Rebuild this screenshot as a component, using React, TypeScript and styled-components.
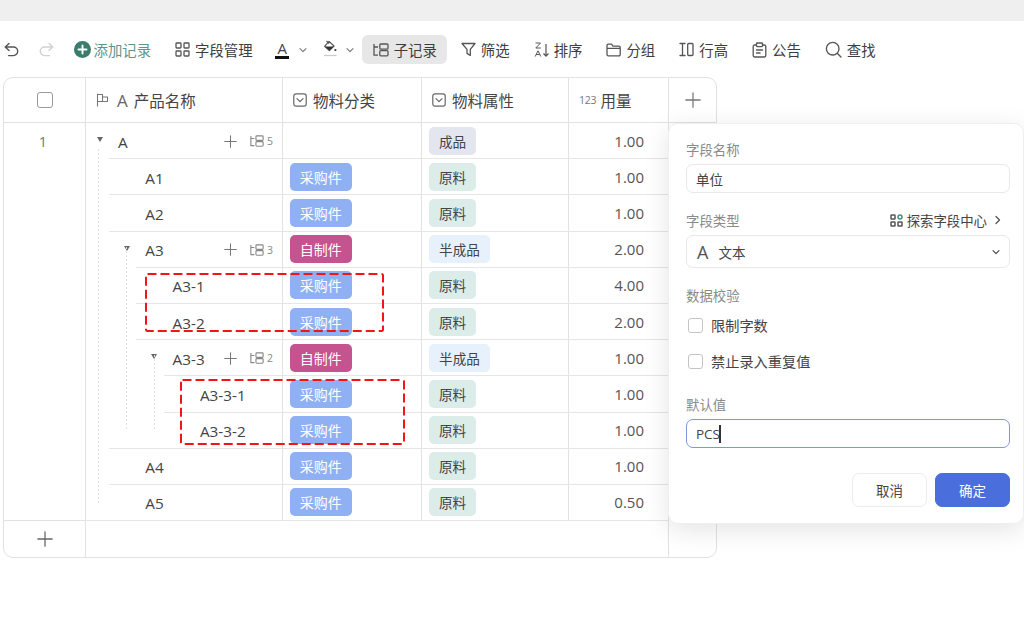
import React from "react";
import styled, { createGlobalStyle } from "styled-components";

const GlobalStyle = createGlobalStyle`
    html, body { margin: 0; padding: 0; background: #fff; }
    body { font-family: "Open Sans", "Noto Sans CJK SC", sans-serif; color: #3d3d3d; }
    * { box-sizing: border-box; }
`;

const Page = styled.div`
    position: relative;
    width: 1024px;
    height: 641px;
    overflow: hidden;
`;

const TopBand = styled.div`
    height: 21px;
    background: #efefef;
`;

/* ---------- toolbar ---------- */

const Toolbar = styled.div`
    display: flex;
    align-items: center;
    gap: 3px;
    height: 29px;
    margin-top: 14px;
    padding-left: 4px;
`;

const HistoryButton = styled.span<{ $muted?: boolean; $gap: number }>`
    display: flex;
    color: ${(p) => (p.$muted ? "#d2d2d2" : "#555")};
    margin-right: ${(p) => p.$gap}px;
`;

const ToolButton = styled.div<{ $active?: boolean; $green?: boolean }>`
    display: flex;
    align-items: center;
    gap: ${(p) => (p.$green ? 3 : 5)}px;
    height: 29px;
    padding: 0 10.5px;
    border-radius: 6px;
    font-size: 14.4px;
    white-space: nowrap;
    color: ${(p) => (p.$green ? "#5f9488" : "#3d3d3d")};
    background: ${(p) => (p.$active ? "#e7e7e7" : "transparent")};
    & svg { color: #555; flex: none; }
`;

const ColorButton = styled.div<{ $left: number; $right: number }>`
    display: flex;
    align-items: center;
    justify-content: space-between;
    width: 31.5px;
    height: 29px;
    margin-left: ${(p) => p.$left}px;
    margin-right: ${(p) => p.$right}px;
    color: #777;
`;

const LetterSwatch = styled.span`
    display: flex;
    flex-direction: column;
    align-items: center;
    width: 14px;
    font-size: 15px;
    line-height: 14px;
    color: #444;
    &::after {
        content: "";
        width: 14px;
        height: 3px;
        margin-top: 1px;
        background: #111;
    }
`;

/* ---------- table ---------- */

const Table = styled.div`
    width: 714px;
    margin: 13px 0 0 3px;
    border: 1px solid #e2e2e2;
    border-radius: 10px;
    overflow: hidden;
`;

const HeaderRow = styled.div`
    display: grid;
    grid-template-columns: 82px 197px 139px 147px 100px 1fr;
    height: 45px;
    border-bottom: 1px solid #e2e2e2;
`;

const HeaderCell = styled.div<{ $center?: boolean; $last?: boolean }>`
    display: flex;
    align-items: center;
    justify-content: ${(p) => (p.$center ? "center" : "flex-start")};
    gap: 6px;
    padding-left: ${(p) => (p.$center ? 0 : 10)}px;
    border-right: ${(p) => (p.$last ? "none" : "1px solid #e2e2e2")};
    font-size: 15.5px;
    color: #444;
    & svg { color: #777; flex: none; }
`;

const HeaderLetter = styled.span`
    font-size: 17px;
    line-height: 1;
    color: #666;
    margin: 0 0 0 2px;
`;

const NumberMark = styled.span`
    font-size: 10.5px;
    color: #777;
    letter-spacing: -0.2px;
    margin-right: -2px;
`;

const HeaderBox = styled.span`
    width: 16px;
    height: 16px;
    border: 1.5px solid #9a9a9a;
    border-radius: 3px;
`;

const Body = styled.div`
    position: relative;
    display: grid;
    grid-template-columns: 82px 1fr;
`;

const RowNumber = styled.div`
    padding-top: 9px;
    padding-right: 3px;
    border-right: 1px solid #e2e2e2;
    border-bottom: 1px solid #e2e2e2;
    font-size: 14.5px;
    color: #777;
    text-align: center;
`;

const Row = styled.div`
    display: grid;
    grid-template-columns: 197px 139px 147px 100px 1fr;
    height: 36.2px;
`;

const Cell = styled.div<{ $last?: boolean }>`
    display: flex;
    align-items: center;
    padding-left: 7px;
    border-right: ${(p) => (p.$last ? "none" : "1px solid #e2e2e2")};
    border-bottom: ${(p) => (p.$last ? "none" : "1px solid #e6e6e6")};
    min-width: 0;
`;

const NameCell = styled.div<{ $depth: number; $line: number }>`
    position: relative;
    display: flex;
    align-items: center;
    padding-left: ${(p) => 9 + p.$depth * 27.3}px;
    padding-right: 9px;
    border-right: 1px solid #e2e2e2;
    &::after {
        content: "";
        position: absolute;
        left: ${(p) => p.$line}px;
        right: 0;
        bottom: 0;
        height: 1px;
        background: #e6e6e6;
    }
`;

const Toggle = styled.span<{ $hidden?: boolean }>`
    flex: none;
    width: 0;
    height: 0;
    margin: 0 15.5px 3px 1.5px;
    visibility: ${(p) => (p.$hidden ? "hidden" : "visible")};
    border-left: 3.5px solid transparent;
    border-right: 3.5px solid transparent;
    border-top: 5px solid #666;
`;

const Name = styled.span`
    flex: 1;
    padding-top: 1px;
    font-size: 15.3px;
    white-space: nowrap;
    color: #444;
`;

const RowTools = styled.span`
    display: flex;
    align-items: center;
    gap: 13px;
    margin-left: auto;
    color: #777;
`;

const ChildCount = styled.span`
    display: flex;
    align-items: center;
    gap: 3px;
    font-size: 10.5px;
    color: #888;
`;

const Tag = styled.span<{ $bg: string; $fg: string; $wide?: boolean }>`
    display: flex;
    align-items: center;
    justify-content: center;
    height: 28px;
    width: ${(p) => (p.$wide ? "61px" : "47px")};
    border-radius: 5px;
    font-size: 13.6px;
    background: ${(p) => p.$bg};
    color: ${(p) => p.$fg};
`;

const MakeTag = styled(Tag)`
    width: 61.5px;
    font-size: 14px;
`;

const Amount = styled.div`
    display: flex;
    align-items: center;
    justify-content: flex-end;
    padding-right: 24px;
    border-right: 1px solid #e2e2e2;
    border-bottom: 1px solid #e6e6e6;
    font-size: 15px;
    color: #555;
`;

const Guide = styled.span<{ $x: number; $y: number; $h: number }>`
    position: absolute;
    left: ${(p) => p.$x}px;
    top: ${(p) => p.$y}px;
    width: 1px;
    height: ${(p) => p.$h}px;
    background: repeating-linear-gradient(to bottom, #e0e0e0 0 2px, transparent 2px 4px);
`;

const FooterRow = styled.div`
    display: grid;
    grid-template-columns: 82px 583px 1fr;
    height: 36px;
`;

const FooterCell = styled.div<{ $last?: boolean }>`
    display: flex;
    align-items: center;
    justify-content: center;
    border-right: ${(p) => (p.$last ? "none" : "1px solid #e2e2e2")};
    color: #666;
`;

/* ---------- red annotation ---------- */

const Annotation = styled.svg<{ $x: number; $y: number }>`
    position: absolute;
    left: ${(p) => p.$x}px;
    top: ${(p) => p.$y}px;
    overflow: visible;
`;

/* ---------- field dialog ---------- */

const Panel = styled.div`
    position: absolute;
    left: 668px;
    top: 123px;
    display: flex;
    flex-direction: column;
    width: 356px;
    height: 401px;
    padding: 16px 13px 16px 17px;
    background: #fff;
    border: 1px solid #efefef;
    border-radius: 10px;
    box-shadow: 0 6px 26px rgba(0, 0, 0, 0.11);
`;

const LabelRow = styled.div<{ $top?: number }>`
    display: flex;
    align-items: center;
    justify-content: space-between;
    height: 18px;
    margin-top: ${(p) => p.$top ?? 0}px;
    font-size: 13.4px;
    color: #8a8a8a;
`;

const ExploreLink = styled.span`
    display: flex;
    align-items: center;
    gap: 4px;
    padding-right: 8px;
    font-size: 13.4px;
    color: #444;
    & svg:last-child { margin-left: 3px; }
`;

const TextBox = styled.div<{ $focus?: boolean }>`
    display: flex;
    align-items: center;
    height: 29px;
    margin-top: 6px;
    padding-left: 9px;
    border: 1px solid ${(p) => (p.$focus ? "#7f95dc" : "#e8e8e8")};
    border-radius: 7px;
    font-size: 13.5px;
    color: #444;
`;

const Caret = styled.span`
    width: 2px;
    height: 18px;
    margin-left: -1px;
    background: #333;
`;

const SelectBox = styled(TextBox)`
    height: 33px;
    margin-top: 6px;
    padding: 0 9px 0 10px;
    gap: 10px;
`;

const SelectLetter = styled.span`
    font-size: 18px;
    line-height: 1;
    color: #555;
`;

const SelectText = styled.span`
    flex: 1;
`;

const CheckRow = styled.label<{ $top: number }>`
    display: flex;
    align-items: center;
    gap: 8px;
    height: 20px;
    margin-top: ${(p) => p.$top}px;
    padding-left: 2px;
    font-size: 14.2px;
    color: #444;
`;

const CheckMark = styled.span`
    width: 15px;
    height: 15px;
    border: 1.5px solid #c4c4c4;
    border-radius: 3px;
`;

const Actions = styled.div`
    display: flex;
    justify-content: flex-end;
    gap: 8px;
    margin-top: auto;
`;

const Button = styled.div<{ $primary?: boolean }>`
    display: flex;
    align-items: center;
    justify-content: center;
    width: 75px;
    height: 34px;
    border-radius: 7px;
    font-size: 13.5px;
    color: ${(p) => (p.$primary ? "#fff" : "#444")};
    background: ${(p) => (p.$primary ? "#4a6fdc" : "#fff")};
    border: 1px solid ${(p) => (p.$primary ? "#4a6fdc" : "#ececec")};
`;

/* ---------- icons ---------- */

type IconProps = { size?: number };

const Svg = (props: { w: number; h: number; children: React.ReactNode; sw?: number }) => (
    <svg
        width={props.w}
        height={props.h}
        viewBox={`0 0 ${props.w} ${props.h}`}
        fill="none"
        stroke="currentColor"
        strokeWidth={props.sw ?? 1.3}
        strokeLinecap="round"
        strokeLinejoin="round"
    >
        {props.children}
    </svg>
);

const UndoIcon = () => (
    <Svg w={15} h={15} sw={1.4}>
        <path d="M5 1.5 1.2 5 5 8.6M1.4 5h8a4.3 4.3 0 0 1 0 8.6H4.5" />
    </Svg>
);

const RedoIcon = () => (
    <Svg w={15} h={15} sw={1.4}>
        <path d="M10 1.5 13.8 5 10 8.6M13.6 5h-8a4.3 4.3 0 0 0 0 8.6h5" />
    </Svg>
);

const AddCircle = () => (
    <svg width="17" height="17" viewBox="0 0 17 17">
        <circle cx="8.5" cy="8.5" r="8.5" fill="#3c7c6c" />
        <path d="M8.5 4.5v8M4.5 8.5h8" stroke="#fff" strokeWidth="1.9" strokeLinecap="round" />
    </svg>
);

const FieldsIcon = () => (
    <Svg w={15} h={15}>
        <rect x="1" y="1" width="5" height="5" rx="0.8" />
        <rect x="9" y="1" width="5" height="5" rx="0.8" />
        <rect x="1" y="9" width="5" height="5" rx="0.8" />
        <rect x="9" y="9" width="5" height="5" rx="0.8" />
    </Svg>
);

const Chevron = ({ size = 8 }: IconProps) => (
    <svg width={size} height={size} viewBox="0 0 8 8" fill="none" stroke="currentColor" strokeWidth="1.1" strokeLinecap="round" strokeLinejoin="round">
        <path d="M1 2.6 4 5.6 7 2.6" />
    </svg>
);

const BucketIcon = () => (
    <svg width="14" height="19" viewBox="0 0 14 19" fill="none">
        <path d="M6 1.4 11 6 6.4 10.6 1.6 6.4Z" stroke="#555" strokeWidth="1.2" strokeLinejoin="round" />
        <path d="M1.6 6.4h9.4L6.4 10.6Z" fill="#333" />
        <path d="M3.5 1 6 3.5" stroke="#555" strokeWidth="1.1" />
        <circle cx="12.4" cy="10" r="1.1" fill="#333" />
        <path d="M1 15.5h12.5" stroke="#ccc" strokeWidth="1.3" />
    </svg>
);

const SubRecordIcon = ({ size = 16 }: IconProps) => (
    <svg width={size} height={size * 0.875} viewBox="0 0 16 14" fill="none" stroke="currentColor" strokeWidth="1.3" strokeLinejoin="round">
        <path d="M1 1v11.2h4M1 4h4" />
        <rect x="6.8" y="1" width="8.2" height="5.2" rx="1" />
        <rect x="6.8" y="7.6" width="8.2" height="5.2" rx="1" />
    </svg>
);

const FilterIcon = () => (
    <Svg w={15} h={15}>
        <path d="M1 1.5h13L9.3 7.4v6L6 11.4v-4Z" />
    </Svg>
);

const SortIcon = () => (
    <svg width="15" height="16" viewBox="0 0 15 16" fill="none">
        <path d="M1.5 1h5L1.8 6h5" stroke="#555" strokeWidth="1" strokeLinejoin="round" />
        <path d="M1.2 14.5 4 8.8l2.8 5.7M2.2 12.5h3.6" stroke="#555" strokeWidth="1" strokeLinejoin="round" />
        <path d="M12 2v12M9.5 11.5 12 14.2l2.5-2.7" stroke="#555" strokeWidth="1.2" />
    </svg>
);

const FolderIcon = () => (
    <Svg w={15} h={14}>
        <path d="M1 2.5A1.3 1.3 0 0 1 2.3 1.2h3.2l1.5 2H13A1.2 1.2 0 0 1 14.2 4.4v7.2A1.2 1.2 0 0 1 13 12.8H2.3A1.3 1.3 0 0 1 1 11.5ZM1 5.4h13" />
    </Svg>
);

const RowHeightIcon = () => (
    <Svg w={15} h={15}>
        <path d="M1 1.5h5M1 13.5h5M3.5 1.5v12" />
        <rect x="8.7" y="1.5" width="5.3" height="12" rx="1" />
    </Svg>
);

const NoticeIcon = () => (
    <Svg w={15} h={16}>
        <path d="M4.5 3H2.6A1.4 1.4 0 0 0 1.2 4.4v9.2A1.4 1.4 0 0 0 2.6 15h9.8a1.4 1.4 0 0 0 1.4-1.4V4.4A1.4 1.4 0 0 0 12.4 3h-1.9" />
        <rect x="4.5" y="1" width="6" height="3.6" rx="0.8" />
        <path d="M4.5 8h6M4.5 11h3.6" />
    </Svg>
);

const SearchIcon = () => (
    <Svg w={17} h={17} sw={1.35}>
        <circle cx="7.7" cy="7.7" r="6.3" />
        <path d="m12.4 12.4 3.6 3.6" />
    </Svg>
);

const FlagIcon = () => (
    <Svg w={13} h={14} sw={1.1}>
        <path d="M1.5 1v12M1.5 1.5h5v7h-5M6.5 4h5v4.5h-5" />
    </Svg>
);

const SelectFieldIcon = () => (
    <svg width="14" height="14" viewBox="0 0 14 14" fill="none" stroke="#666" strokeWidth="1.2" strokeLinecap="round" strokeLinejoin="round">
        <rect x="0.8" y="0.8" width="12.4" height="12.4" rx="2.2" />
        <path d="M4 5.6 7 8.6 10 5.6" />
    </svg>
);

const PlusIcon = ({ size = 15 }: IconProps) => (
    <svg width={size} height={size} viewBox="0 0 15 15" fill="none" stroke="currentColor" strokeWidth="1.2" strokeLinecap="round">
        <path d="M7.5 0.8v13.4M0.8 7.5h13.4" />
    </svg>
);

const ExploreIcon = () => (
    <svg width="13" height="13" viewBox="0 0 13 13" fill="none" stroke="#555" strokeWidth="1.5">
        <rect x="1" y="1" width="4" height="4" rx="0.6" />
        <rect x="1" y="8" width="4" height="4" rx="0.6" />
        <rect x="8" y="8" width="4" height="4" rx="0.6" />
        <circle cx="10" cy="3" r="2" stroke="#3f8f7b" />
    </svg>
);

const ChevronRight = () => (
    <svg width="8" height="10" viewBox="0 0 8 10" fill="none" stroke="#555" strokeWidth="1.3" strokeLinecap="round" strokeLinejoin="round">
        <path d="M2 1.5 5.5 5 2 8.5" />
    </svg>
);

/* ---------- data ---------- */

type Part = { label: string; bg: string; fg: string };

const bought: Part = { label: "采购件", bg: "#8fb1f4", fg: "#fff" };
const made: Part = { label: "自制件", bg: "#c4538f", fg: "#fff" };
const finished: Part = { label: "成品", bg: "#e3e6ef", fg: "#444" };
const raw: Part = { label: "原料", bg: "#dcece8", fg: "#444" };
const half: Part = { label: "半成品", bg: "#e6f1fb", fg: "#444" };

type Item = {
    name: string;
    depth: number;
    line: number;
    children?: number;
    kind?: Part;
    attr: Part;
    qty: string;
};

const rows: Item[] = [
    { name: "A", depth: 0, line: 23, children: 5, attr: finished, qty: "1.00" },
    { name: "A1", depth: 1, line: 23, kind: bought, attr: raw, qty: "1.00" },
    { name: "A2", depth: 1, line: 23, kind: bought, attr: raw, qty: "1.00" },
    { name: "A3", depth: 1, line: 50, children: 3, kind: made, attr: half, qty: "2.00" },
    { name: "A3-1", depth: 2, line: 50, kind: bought, attr: raw, qty: "4.00" },
    { name: "A3-2", depth: 2, line: 50, kind: bought, attr: raw, qty: "2.00" },
    { name: "A3-3", depth: 2, line: 78, children: 2, kind: made, attr: half, qty: "1.00" },
    { name: "A3-3-1", depth: 3, line: 78, kind: bought, attr: raw, qty: "1.00" },
    { name: "A3-3-2", depth: 3, line: 23, kind: bought, attr: raw, qty: "1.00" },
    { name: "A4", depth: 1, line: 23, kind: bought, attr: raw, qty: "1.00" },
    { name: "A5", depth: 1, line: 0, kind: bought, attr: raw, qty: "0.50" },
];

const tools = [
    { label: "筛选", icon: <FilterIcon /> },
    { label: "排序", icon: <SortIcon /> },
    { label: "分组", icon: <FolderIcon /> },
    { label: "行高", icon: <RowHeightIcon /> },
    { label: "公告", icon: <NoticeIcon /> },
    { label: "查找", icon: <SearchIcon /> },
];

const RedBox = (props: { x: number; y: number; w: number; h: number }) => (
    <Annotation $x={props.x} $y={props.y} width={props.w} height={props.h}>
        <rect
            x="0"
            y="0"
            width={props.w}
            height={props.h}
            rx="1.5"
            fill="none"
            stroke="#f51414"
            strokeWidth="2"
            strokeDasharray="9 4"
        />
    </Annotation>
);

const App = () => {
    return (
        <Page>
            <GlobalStyle />
            <TopBand />
            <Toolbar>
                <HistoryButton $gap={17}><UndoIcon /></HistoryButton>
                <HistoryButton $muted $gap={6}><RedoIcon /></HistoryButton>
                <ToolButton $green><AddCircle />添加记录</ToolButton>
                <ToolButton><FieldsIcon />字段管理</ToolButton>
                <ColorButton $left={9} $right={4}><LetterSwatch>A</LetterSwatch><Chevron /></ColorButton>
                <ColorButton $left={9} $right={5}><BucketIcon /><Chevron /></ColorButton>
                <ToolButton $active><SubRecordIcon />子记录</ToolButton>
                {tools.map((t) => (
                    <ToolButton key={t.label}>{t.icon}{t.label}</ToolButton>
                ))}
            </Toolbar>

            <Table>
                <HeaderRow>
                    <HeaderCell $center><HeaderBox /></HeaderCell>
                    <HeaderCell><FlagIcon /><HeaderLetter>A</HeaderLetter>产品名称</HeaderCell>
                    <HeaderCell><SelectFieldIcon />物料分类</HeaderCell>
                    <HeaderCell><SelectFieldIcon />物料属性</HeaderCell>
                    <HeaderCell><NumberMark>123</NumberMark>用量</HeaderCell>
                    <HeaderCell $center $last><PlusIcon size={16} /></HeaderCell>
                </HeaderRow>
                <Body>
                    <RowNumber>1</RowNumber>
                    <div>
                        {rows.map((r) => (
                            <Row key={r.name}>
                                <NameCell $depth={r.depth} $line={r.line}>
                                    <Toggle $hidden={!r.children} />
                                    <Name>{r.name}</Name>
                                    {r.children ? (
                                        <RowTools>
                                            <PlusIcon size={13} />
                                            <ChildCount><SubRecordIcon size={14} />{r.children}</ChildCount>
                                        </RowTools>
                                    ) : null}
                                </NameCell>
                                <Cell>
                                    {r.kind ? <MakeTag $bg={r.kind.bg} $fg={r.kind.fg}>{r.kind.label}</MakeTag> : null}
                                </Cell>
                                <Cell>
                                    <Tag $bg={r.attr.bg} $fg={r.attr.fg} $wide={r.attr.label.length > 2}>{r.attr.label}</Tag>
                                </Cell>
                                <Amount>{r.qty}</Amount>
                                <Cell $last />
                            </Row>
                        ))}
                    </div>
                    <Guide $x={94} $y={26} $h={354} />
                    <Guide $x={122} $y={124} $h={183} />
                    <Guide $x={150} $y={232} $h={75} />
                </Body>
                <FooterRow>
                    <FooterCell><PlusIcon size={16} /></FooterCell>
                    <FooterCell />
                    <FooterCell $last />
                </FooterRow>
            </Table>

            <RedBox x={146} y={274} w={237} h={57} />
            <RedBox x={181} y={380} w={223} h={64} />

            <Panel>
                <LabelRow>字段名称</LabelRow>
                <TextBox>单位</TextBox>
                <LabelRow $top={18}>
                    字段类型
                    <ExploreLink><ExploreIcon />探索字段中心<ChevronRight /></ExploreLink>
                </LabelRow>
                <SelectBox>
                    <SelectLetter>A</SelectLetter>
                    <SelectText>文本</SelectText>
                    <Chevron />
                </SelectBox>
                <LabelRow $top={18}>数据校验</LabelRow>
                <CheckRow $top={11}><CheckMark />限制字数</CheckRow>
                <CheckRow $top={16}><CheckMark />禁止录入重复值</CheckRow>
                <LabelRow $top={24}>默认值</LabelRow>
                <TextBox $focus>PCS<Caret /></TextBox>
                <Actions>
                    <Button>取消</Button>
                    <Button $primary>确定</Button>
                </Actions>
            </Panel>
        </Page>
    );
};

export default App;
